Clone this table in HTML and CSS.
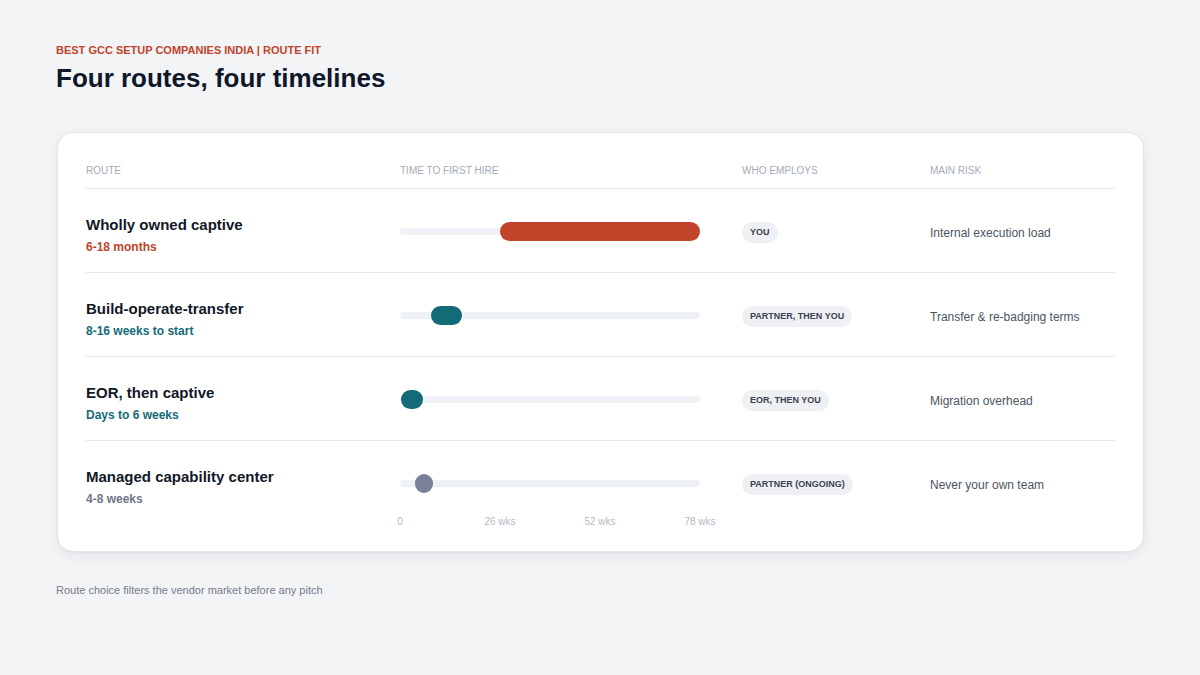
FILE: index.html
```html
<!DOCTYPE html>
<html lang="en">
<head>
<meta charset="utf-8">
<title>Four routes, four timelines</title>
<link rel="stylesheet" href="styles.css">
</head>
<body>
<main class="page">
  <header class="intro">
    <p class="eyebrow">BEST GCC SETUP COMPANIES INDIA | ROUTE FIT</p>
    <h1 class="title">Four routes, four timelines</h1>
  </header>

  <section class="card">
    <div class="row head">
      <div class="c-route">ROUTE</div>
      <div class="c-time">TIME TO FIRST HIRE</div>
      <div class="c-who">WHO EMPLOYS</div>
      <div class="c-risk">MAIN RISK</div>
    </div>

    <div class="row item">
      <div class="c-route">
        <div class="r-name">Wholly owned captive</div>
        <div class="r-sub red">6-18 months</div>
      </div>
      <div class="c-time">
        <div class="track"><span class="bar red-bg" style="left:100px;width:200px"></span></div>
      </div>
      <div class="c-who"><span class="pill">YOU</span></div>
      <div class="c-risk"><span class="risk">Internal execution load</span></div>
    </div>

    <div class="row item">
      <div class="c-route">
        <div class="r-name">Build-operate-transfer</div>
        <div class="r-sub teal">8-16 weeks to start</div>
      </div>
      <div class="c-time">
        <div class="track"><span class="bar teal-bg" style="left:31px;width:31px"></span></div>
      </div>
      <div class="c-who"><span class="pill">PARTNER, THEN YOU</span></div>
      <div class="c-risk"><span class="risk">Transfer &amp; re-badging terms</span></div>
    </div>

    <div class="row item">
      <div class="c-route">
        <div class="r-name">EOR, then captive</div>
        <div class="r-sub teal">Days to 6 weeks</div>
      </div>
      <div class="c-time">
        <div class="track"><span class="bar teal-bg" style="left:1px;width:22px"></span></div>
      </div>
      <div class="c-who"><span class="pill">EOR, THEN YOU</span></div>
      <div class="c-risk"><span class="risk">Migration overhead</span></div>
    </div>

    <div class="row item last">
      <div class="c-route">
        <div class="r-name">Managed capability center</div>
        <div class="r-sub grey">4-8 weeks</div>
      </div>
      <div class="c-time">
        <div class="track"><span class="bar grey-bg" style="left:15px;width:18px"></span></div>
      </div>
      <div class="c-who"><span class="pill">PARTNER (ONGOING)</span></div>
      <div class="c-risk"><span class="risk">Never your own team</span></div>
    </div>

    <div class="row axis-row">
      <div class="c-route"></div>
      <div class="c-time">
        <div class="axis">
          <span class="tick" style="left:0">0</span>
          <span class="tick" style="left:100px">26 wks</span>
          <span class="tick" style="left:200px">52 wks</span>
          <span class="tick" style="left:300px">78 wks</span>
        </div>
      </div>
      <div class="c-who"></div>
      <div class="c-risk"></div>
    </div>
  </section>

  <p class="foot">Route choice filters the vendor market before any pitch</p>
</main>
</body>
</html>
```

FILE: styles.css
```css
* { box-sizing: border-box; }
html, body { margin: 0; padding: 0; }
body {
  background: #f3f4f6;
  font-family: "Liberation Sans", Arial, sans-serif;
  color: #0f172a;
  width: 1200px;
  height: 675px;
  overflow: hidden;
}
.page {
  padding: 44px 56px 0 56px;
}
.eyebrow {
  margin: 0;
  font-size: 11px;
  line-height: 13px;
  font-weight: 700;
  color: #c0432a;
}
.title {
  margin: 5px 0 0 0;
  font-size: 26px;
  line-height: 32px;
  font-weight: 700;
  color: #0f172a;
}
.card {
  margin: 38px 0 0 1px;
  width: 1087px;
  background: #ffffff;
  border: 1px solid #e2e5ea;
  border-radius: 16px;
  box-shadow: 0 4px 14px rgba(15, 23, 42, 0.06), 0 1px 3px rgba(15, 23, 42, 0.04);
  padding: 31px 28px 22px 28px;
}
.row {
  display: flex;
  align-items: flex-start;
}
.c-route { width: 314px; flex: none; }
.c-time { width: 342px; flex: none; }
.c-who { width: 188px; flex: none; }
.c-risk { flex: 1; }

.head {
  font-size: 10px;
  line-height: 13px;
  color: #a3abb8;
  padding-bottom: 11px;
  border-bottom: 1px solid #e2e6ec;
}
.item {
  height: 84px;
  border-bottom: 1px solid #e5e8ed;
}
.item.last {
  border-bottom: none;
  height: 74px;
}
.r-name {
  margin-top: 27px;
  font-size: 15px;
  line-height: 18px;
  font-weight: 700;
  color: #111827;
}
.r-sub {
  margin-top: 5px;
  font-size: 12px;
  line-height: 16px;
  font-weight: 700;
}
.red { color: #c0432a; }
.teal { color: #136b77; }
.grey { color: #6e7585; }

.track {
  position: relative;
  margin-top: 39px;
  width: 300px;
  height: 7px;
  border-radius: 4px;
  background: #eef1f5;
}
.bar {
  position: absolute;
  top: -6px;
  height: 19px;
  border-radius: 10px;
}
.red-bg { background: #c0432a; }
.teal-bg { background: #136b77; }
.grey-bg { background: #7a8299; }

.pill {
  display: inline-block;
  margin-top: 33px;
  background: #eef0f4;
  color: #3b4252;
  font-size: 9px;
  line-height: 13px;
  font-weight: 700;
  padding: 4px 8px;
  border-radius: 11px;
}

.risk {
  display: block;
  margin-top: 36px;
  font-size: 12px;
  line-height: 16px;
  color: #4b5563;
}

.axis-row { height: 14px; }
.axis {
  position: relative;
  height: 14px;
  width: 300px;
}
.tick {
  position: absolute;
  top: 0;
  transform: translateX(-50%);
  font-size: 10px;
  line-height: 14px;
  color: #b3bac6;
  white-space: nowrap;
}
.foot {
  margin: 32px 0 0 0;
  font-size: 11px;
  line-height: 13px;
  color: #737b8c;
}
```
